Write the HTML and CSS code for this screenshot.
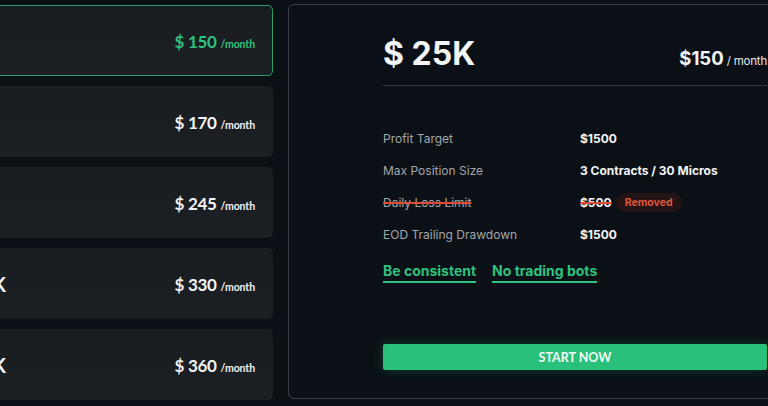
FILE: index.html
```html
<!DOCTYPE html>
<html lang="en">
<head>
<meta charset="utf-8">
<title>Plans</title>
<link rel="stylesheet" href="styles.css">
</head>
<body>
<div class="page">
  <div class="plans">
    <div class="plan active"><span class="size">$ 25K</span><span class="price">$ 150 <small>/month</small></span></div>
    <div class="plan"><span class="size">$ 50K</span><span class="price">$ 170 <small>/month</small></span></div>
    <div class="plan"><span class="size">$ 75K</span><span class="price">$ 245 <small>/month</small></span></div>
    <div class="plan"><span class="size">$ 100K</span><span class="price">$ 330 <small>/month</small></span></div>
    <div class="plan"><span class="size">$ 150K</span><span class="price">$ 360 <small>/month</small></span></div>
  </div>
  <div class="detail">
    <div class="detail-inner">
      <div class="head">
        <h1 class="title">$ 25K</h1>
        <div class="monthly"><b>$150</b> / month</div>
      </div>
      <div class="rows">
        <div class="row"><span class="label">Profit Target</span><span class="value">$1500</span></div>
        <div class="row"><span class="label">Max Position Size</span><span class="value">3 Contracts / 30 Micros</span></div>
        <div class="row"><span class="label struck">Daily Loss Limit</span><span class="value"><span class="struck white">$500</span><span class="badge">Removed</span></span></div>
        <div class="row"><span class="label">EOD Trailing Drawdown</span><span class="value">$1500</span></div>
      </div>
      <div class="rules">
        <span class="rule">Be consistent</span>
        <span class="rule">No trading bots</span>
      </div>
      <button class="cta">START NOW</button>
    </div>
  </div>
</div>
</body>
</html>
```
FILE: styles.css
```css
html, body {
  margin: 0;
  padding: 0;
  background: #0b1017;
  overflow: hidden;
  width: 768px;
  height: 406px;
}
.page {
  display: flex;
  gap: 15px;
  margin-left: -100px;
  padding-top: 4px;
  width: 1100px;
}
.plans {
  width: 373px;
  flex: none;
  display: flex;
  flex-direction: column;
  gap: 10px;
  padding-top: 1px;
}
.plan {
  height: 71px;
  box-sizing: border-box;
  border-radius: 5px;
  background: linear-gradient(180deg, #191c20 0%, #1c1f23 100%);
  border: 1px solid transparent;
  display: flex;
  align-items: center;
  justify-content: space-between;
  padding: 0 17px 0 40px;
  font-family: "Lato", "Open Sans", sans-serif;
  font-weight: 700;
  color: #f2f3f4;
}
.plan.active {
  border-color: #2b9e66;
  color: #2ec27e;
}
.size {
  font-size: 20px;
  font-weight: 700;
  color: #f2f3f4;
}
.price {
  font-size: 17px;
  letter-spacing: -0.3px;
  padding-top: 1px;
}
.price small {
  font-size: 10.5px;
  letter-spacing: -0.1px;
}
.detail {
  flex: none;
  width: 560px;
  height: 395px;
  box-sizing: border-box;
  border: 1px solid #3a3f45;
  border-radius: 6px;
  background: #0b1017;
  padding: 29px 0 0 94px;
  font-family: "Inter", "Liberation Sans", sans-serif;
}
.detail-inner {
  width: 384px;
}
.head {
  display: flex;
  align-items: center;
  justify-content: space-between;
  padding-bottom: 11px;
  border-bottom: 1px solid #363b41;
}
.title {
  margin: 0;
  font-size: 32px;
  line-height: 40px;
  font-weight: 700;
  color: #f4f5f6;
}
.monthly {
  font-size: 11.5px;
  letter-spacing: -0.2px;
  color: #e6e7e8;
  padding-top: 8px;
  white-space: nowrap;
}
.monthly b {
  font-size: 18.5px;
  font-weight: 700;
  letter-spacing: 0;
  color: #f4f5f6;
}
.rows {
  margin-top: 36px;
}
.row {
  display: flex;
  height: 32px;
  align-items: center;
  font-size: 12px;
}
.label {
  width: 197px;
  color: #a3a6aa;
}
.value {
  color: #f4f5f6;
  font-weight: 700;
  display: flex;
  align-items: center;
  gap: 4px;
}
.struck {
  text-decoration: line-through;
  text-decoration-color: #e04a32;
  text-decoration-thickness: 2px;
}
.badge {
  background: #241416;
  color: #e0553b;
  font-size: 10.5px;
  font-weight: 700;
  padding: 3px 9px;
  border-radius: 10px;
  line-height: 13px;
}
.rules {
  display: flex;
  gap: 16px;
  margin-top: 11px;
}
.rule {
  color: #2ec27e;
  font-size: 14px;
  font-weight: 700;
  line-height: 20px;
  border-bottom: 2px solid #2ec27e;
}
.cta {
  display: block;
  width: 384px;
  height: 26px;
  margin-top: 61px;
  border: none;
  border-radius: 2px;
  background: #28c07a;
  color: #f4fbf7;
  font-family: "Lato", "Open Sans", sans-serif;
  font-weight: 700;
  font-size: 12.5px;
  box-shadow: 0 0 12px rgba(40, 192, 122, 0.25);
  padding: 0;
}
```
